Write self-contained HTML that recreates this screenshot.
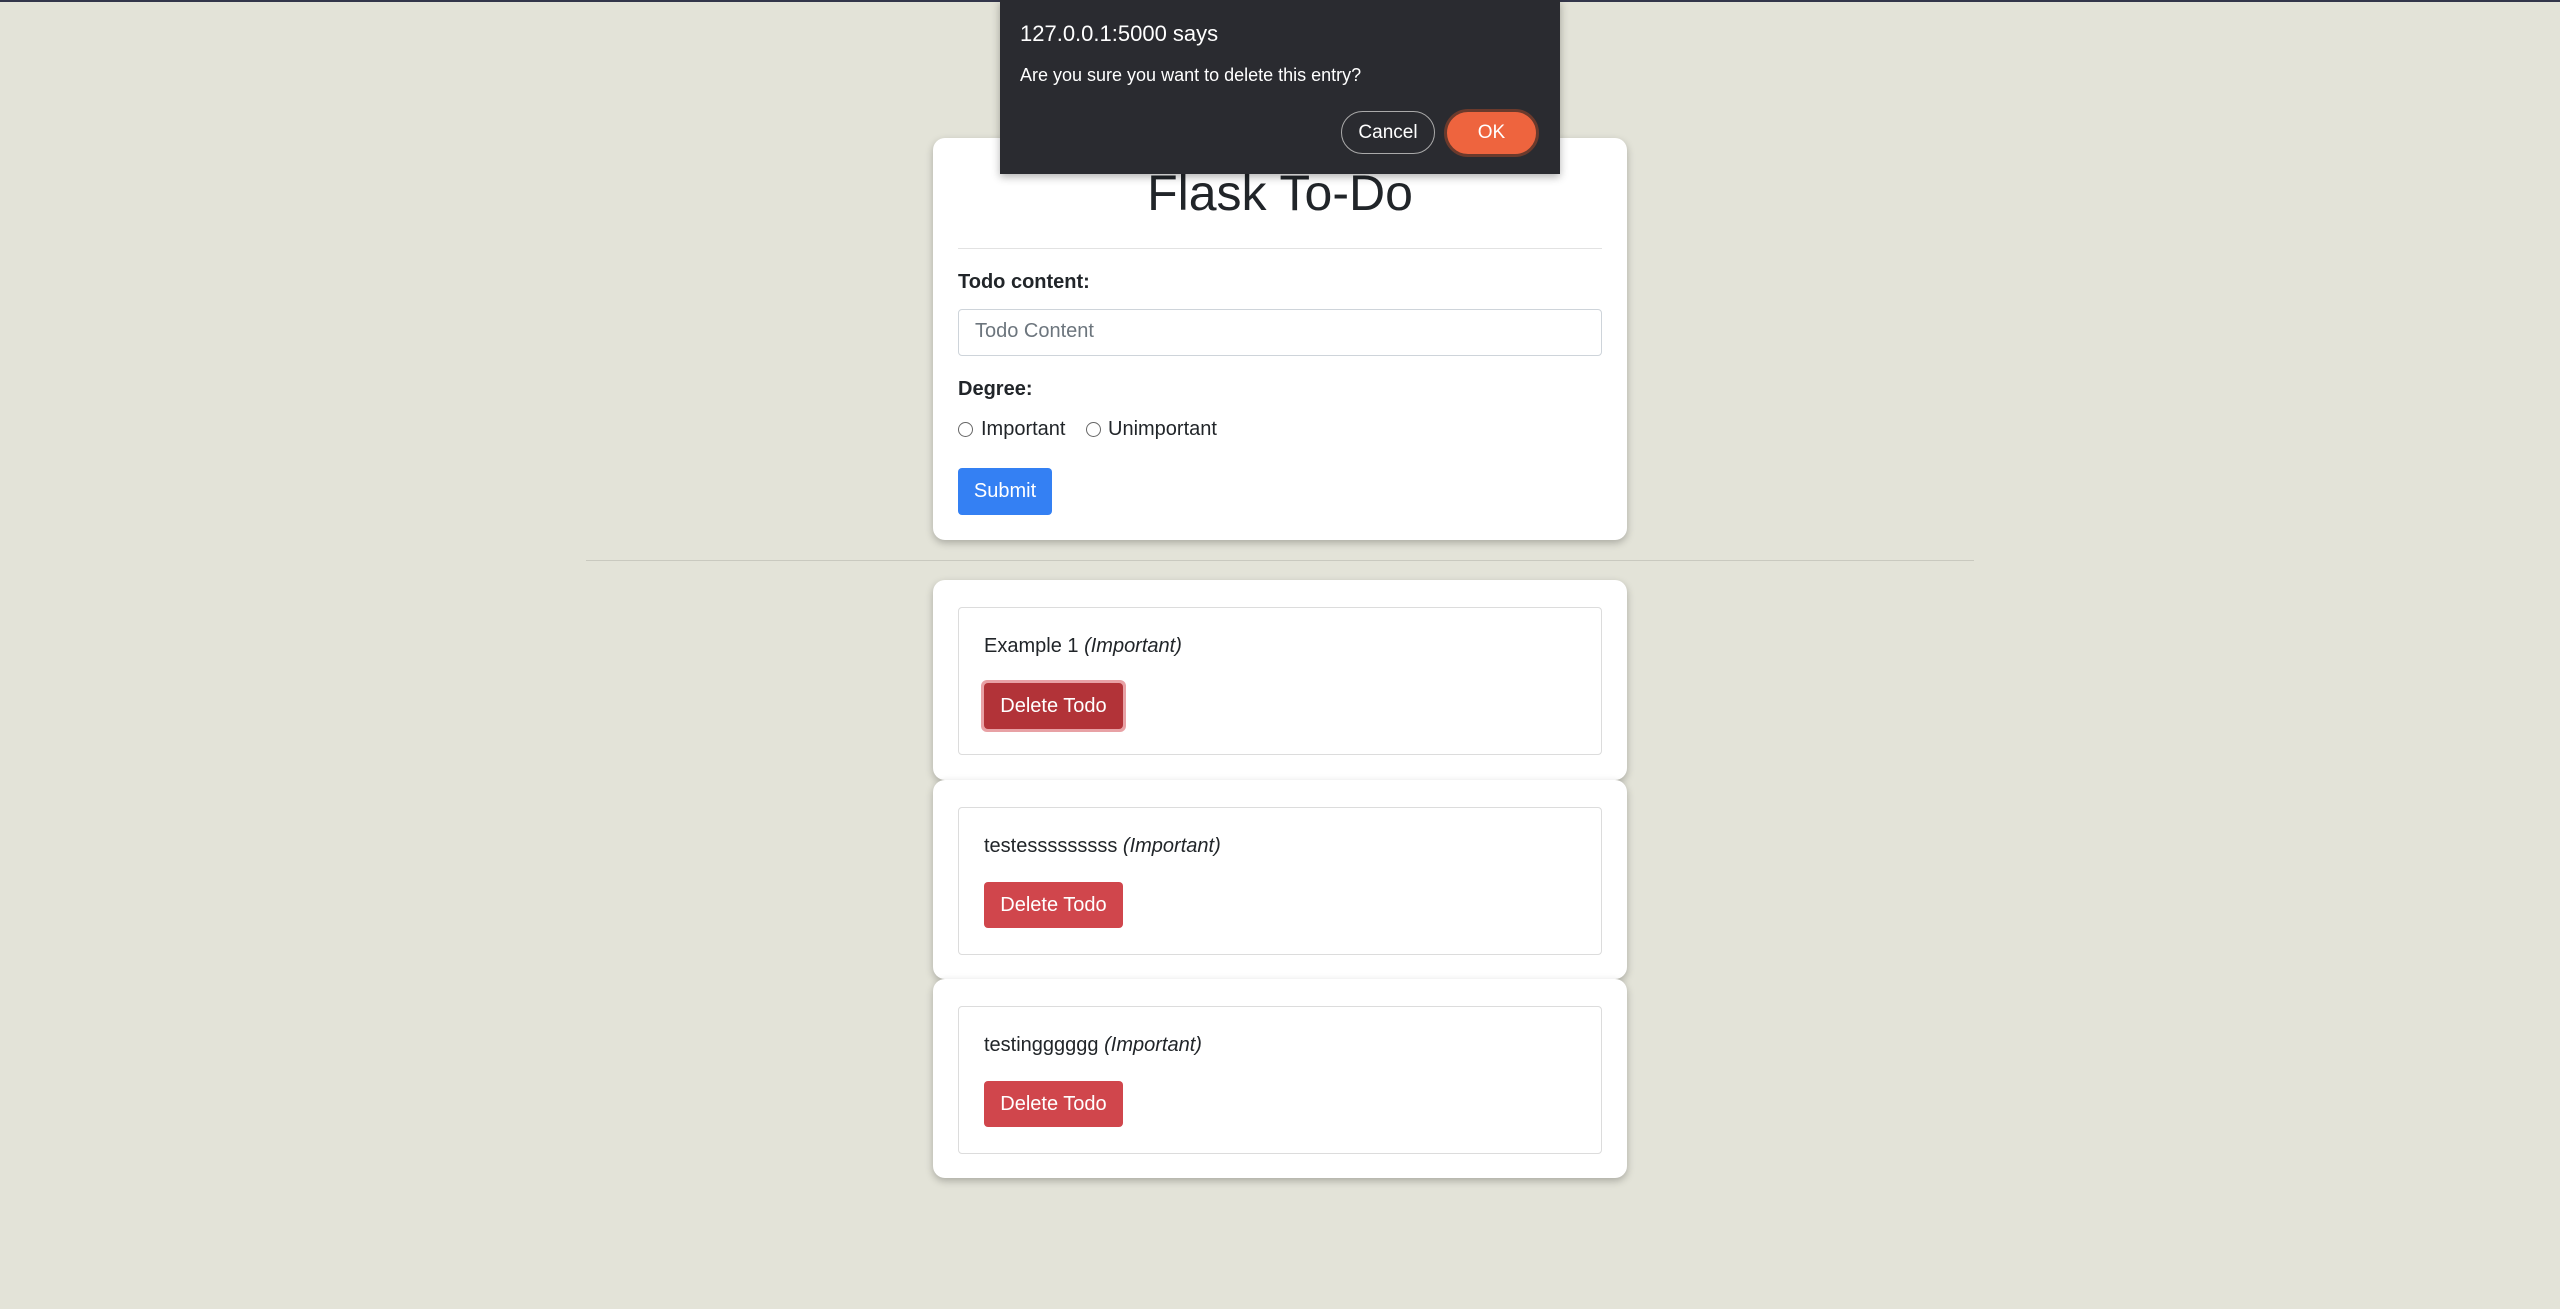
<!DOCTYPE html>
<html><head><meta charset="utf-8"><style>
*{box-sizing:border-box;margin:0;padding:0}
body{width:2560px;height:1309px;background:#e3e3d8;font-family:"Liberation Sans",sans-serif;color:#212529;position:relative;overflow:hidden}
.abs{position:absolute}
.card{position:absolute;left:933px;width:694px;background:#fff;border-radius:12px;box-shadow:0 3px 8px rgba(0,0,0,.25)}
.box{position:absolute;left:25px;right:25px;border:1px solid #dcdcdc;border-radius:4px}
.btn{position:absolute;color:#fff;font-size:20px;display:flex;align-items:center;justify-content:center;border-radius:4px}
.del{background:#d0464c;width:139px;height:46px;left:25px}
.radio{position:absolute;width:15px;height:15px;border:1px solid #666;border-radius:50%;top:422px}
</style></head><body>
<div class="abs" style="left:0;top:0;width:2560px;height:2px;background:#33364a"></div>
<div class="card" style="top:138px;height:402px">
  <div class="abs" style="left:0;right:0;top:26px;text-align:center;font-size:50px;line-height:58px">Flask To-Do</div>
  <div class="abs" style="left:25px;right:25px;top:110px;height:1px;background:#e2e2e2"></div>
  <div class="abs" style="left:25px;top:133px;font-size:20px;font-weight:bold">Todo content:</div>
  <div class="abs" style="left:25px;right:25px;top:171px;height:47px;border:1px solid #ced4da;border-radius:4px;font-size:20px;color:#6c757d;padding:10px 16px">Todo Content</div>
  <div class="abs" style="left:25px;top:240px;font-size:20px;font-weight:bold">Degree:</div>
  <div class="abs" style="left:48px;top:280px;font-size:20px">Important</div>
  <div class="abs" style="left:175px;top:280px;font-size:20px">Unimportant</div>
  <div class="btn" style="left:25px;top:330px;width:94px;height:47px;background:#3480f3">Submit</div>
</div>
<div class="radio" style="left:958px"></div>
<div class="radio" style="left:1086px"></div>
<div class="abs" style="left:586px;width:1388px;top:560px;height:1px;background:#c9c9bf"></div>

<div class="card" style="top:580px;height:200px"><div class="box" style="top:27px;height:148px"></div>
  <div class="abs" style="left:51px;top:55px;font-size:20px">Example 1 <i>(Important)</i></div>
  <div class="btn del" style="left:48px;top:100px;width:145px;height:52px;background:#e8a1a5;border-radius:6px"></div>
  <div class="btn del" style="left:51px;top:103px;background:#b23338">Delete Todo</div>
</div>
<div class="card" style="top:780px;height:199px"><div class="box" style="top:27px;height:148px"></div>
  <div class="abs" style="left:51px;top:55px;font-size:20px">testesssssssss <i>(Important)</i></div>
  <div class="btn del" style="left:51px;top:102px">Delete Todo</div>
</div>
<div class="card" style="top:979px;height:199px"><div class="box" style="top:27px;height:148px"></div>
  <div class="abs" style="left:51px;top:55px;font-size:20px">testingggggg <i>(Important)</i></div>
  <div class="btn del" style="left:51px;top:102px">Delete Todo</div>
</div>

<div class="abs" style="left:1000px;top:0;width:560px;height:174px;background:#2a2b30;box-shadow:0 3px 8px rgba(0,0,0,.3);color:#fff">
  <div class="abs" style="left:20px;top:21px;font-size:22px">127.0.0.1:5000 says</div>
  <div class="abs" style="left:20px;top:65px;font-size:18px">Are you sure you want to delete this entry?</div>
  <div class="abs" style="left:341px;top:111px;width:94px;height:43px;border:1px solid #aaa;border-radius:22px;font-size:19px;display:flex;align-items:center;justify-content:center">Cancel</div>
  <div class="abs" style="left:444px;top:109px;width:95px;height:48px;border:3px solid #6b3a2c;border-radius:24px;background:#ee643e;font-size:19px;display:flex;align-items:center;justify-content:center">OK</div>
</div>
</body></html>
